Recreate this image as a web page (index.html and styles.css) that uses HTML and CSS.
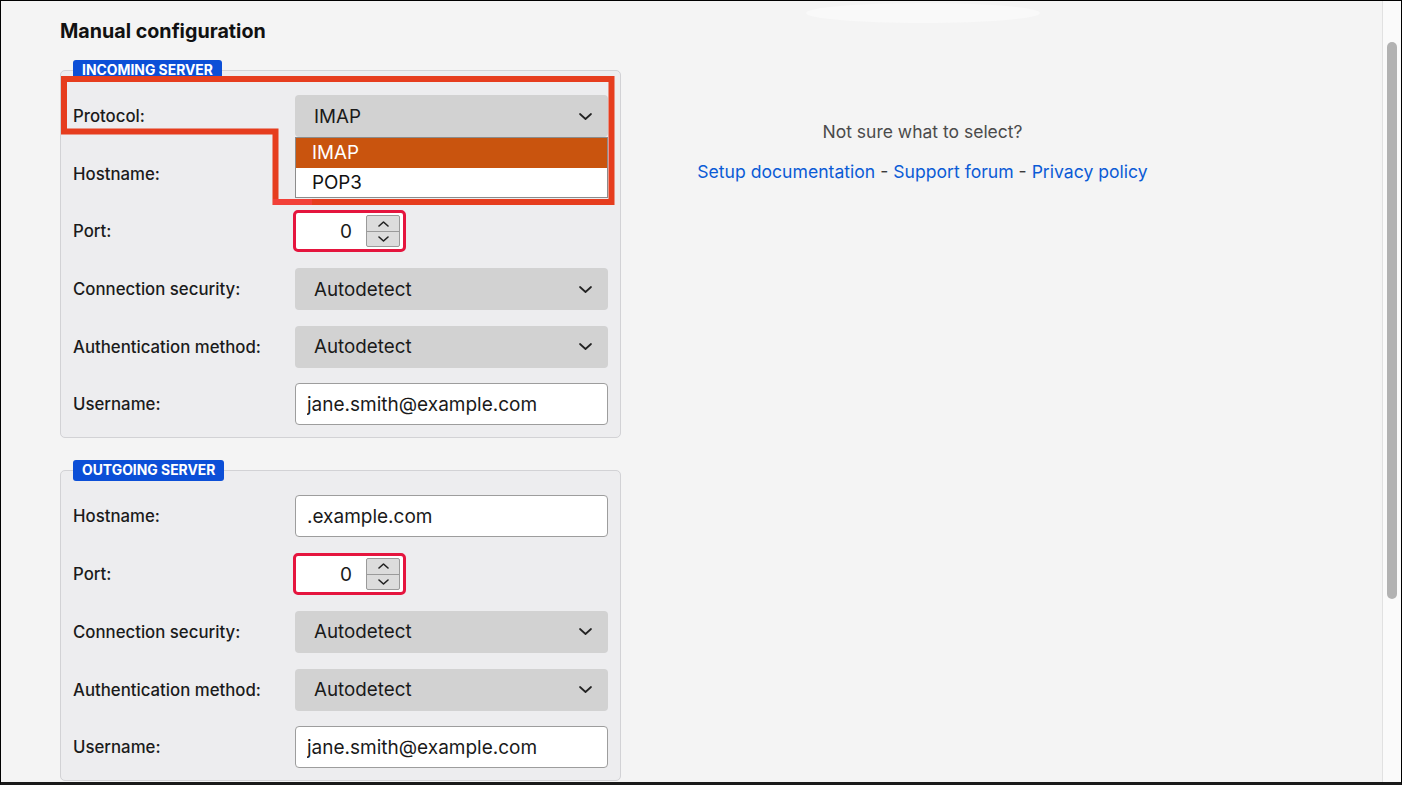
FILE: index.html
```html
<!DOCTYPE html>
<html lang="en">
<head>
  <meta charset="UTF-8">
  <title>Account setup</title>
  <meta name="viewport" content="width=device-width, initial-scale=1.0">
  <link rel="stylesheet" href="styles.css">
</head>
<body>

<div class="window">
  <main class="page">
    <h1 class="title">Manual configuration</h1>

    <div class="columns">
      <div class="config">

        <fieldset class="server">
          <legend class="badge">Incoming server</legend>
          <div class="rows">
            <label class="label">Protocol:</label>
            <div class="field">
              <div class="select">
                <span>IMAP</span>
                <svg class="chevron" width="13" height="7" viewBox="0 0 13 7"><path d="M1 1l5.5 5 5.5-5"/></svg>
              </div>
              <ul class="options">
                <li class="active">IMAP</li>
                <li>POP3</li>
              </ul>
            </div>

            <label class="label">Hostname:</label>
            <input class="text" type="text" value=".example.com">

            <label class="label">Port:</label>
            <div class="number invalid">
              <span class="value">0</span>
              <span class="spin">
                <span class="step"><svg width="11" height="6" viewBox="0 0 11 6"><path d="M1 5l4.5-4 4.5 4"/></svg></span>
                <span class="step"><svg width="11" height="6" viewBox="0 0 11 6"><path d="M1 1l4.5 4 4.5-4"/></svg></span>
              </span>
            </div>

            <label class="label">Connection security:</label>
            <div class="select">
              <span>Autodetect</span>
              <svg class="chevron" width="13" height="7" viewBox="0 0 13 7"><path d="M1 1l5.5 5 5.5-5"/></svg>
            </div>

            <label class="label">Authentication method:</label>
            <div class="select">
              <span>Autodetect</span>
              <svg class="chevron" width="13" height="7" viewBox="0 0 13 7"><path d="M1 1l5.5 5 5.5-5"/></svg>
            </div>

            <label class="label">Username:</label>
            <input class="text" type="text" value="jane.smith@example.com">
          </div>
        </fieldset>

        <fieldset class="server">
          <legend class="badge">Outgoing server</legend>
          <div class="rows">
            <label class="label">Hostname:</label>
            <input class="text" type="text" value=".example.com">

            <label class="label">Port:</label>
            <div class="number invalid">
              <span class="value">0</span>
              <span class="spin">
                <span class="step"><svg width="11" height="6" viewBox="0 0 11 6"><path d="M1 5l4.5-4 4.5 4"/></svg></span>
                <span class="step"><svg width="11" height="6" viewBox="0 0 11 6"><path d="M1 1l4.5 4 4.5-4"/></svg></span>
              </span>
            </div>

            <label class="label">Connection security:</label>
            <div class="select">
              <span>Autodetect</span>
              <svg class="chevron" width="13" height="7" viewBox="0 0 13 7"><path d="M1 1l5.5 5 5.5-5"/></svg>
            </div>

            <label class="label">Authentication method:</label>
            <div class="select">
              <span>Autodetect</span>
              <svg class="chevron" width="13" height="7" viewBox="0 0 13 7"><path d="M1 1l5.5 5 5.5-5"/></svg>
            </div>

            <label class="label">Username:</label>
            <input class="text" type="text" value="jane.smith@example.com">
          </div>
        </fieldset>

      </div>

      <div class="help">
        <p class="hint">Not sure what to select?</p>
        <p class="links">
          <a href="#">Setup documentation</a> - <a href="#">Support forum</a> - <a href="#">Privacy policy</a>
        </p>
      </div>
    </div>
  </main>

  <div class="scrollbar"><div class="thumb"></div></div>

  <!-- highlight drawn around the protocol picker -->
  <svg class="marker" width="1402" height="785" viewBox="0 0 1402 785">
    <path d="M64 79H611.5V202H275.5V131.5H64Z"/>
    <line class="marker-tail" x1="273" y1="202" x2="312" y2="202"/>
  </svg>
</div>

</body>
</html>
```

FILE: styles.css
```css
* {
  box-sizing: border-box;
}

body {
  margin: 0;
  font-family: Inter, "Liberation Sans", sans-serif;
  color: #1b1b1b;
  background: #fff;
}

.window {
  position: relative;
  width: 1402px;
  height: 785px;
  display: flex;
  border: 1px solid #000;
  border-bottom: 3px solid #1a1a1a;
  background: #f4f4f4;
  overflow: hidden;
}

/* faint glare near the top edge */
.window::after {
  content: "";
  position: absolute;
  left: 805px;
  top: 2px;
  width: 234px;
  height: 20px;
  border-radius: 50%;
  background: #f9f9f9;
  pointer-events: none;
}

.page {
  flex: 1;
  padding: 16px 0 0 59px;
}

.title {
  margin: 0 0 15px;
  font-size: 19.7px;
  line-height: 28px;
  font-weight: 700;
  color: #111;
}

.columns {
  display: grid;
  grid-template-columns: 561px 603px;
}

.server {
  margin: 0;
  padding: 14px 12px 12px;
  border: 1px solid #d2d2d5;
  border-radius: 5px;
  background: #ededef;
  min-width: 0;
}

.server + .server {
  margin-top: 22px;
}

.badge {
  padding: 0 9px;
  font-size: 13.9px;
  line-height: 21px;
  font-weight: 700;
  text-transform: uppercase;
  color: #fff;
  background: #0c4fd7;
  border-radius: 3px;
}

.rows {
  display: grid;
  grid-template-columns: 222px 313px;
  row-gap: 15.7px;
  align-items: center;
}

.label {
  font-size: 16.8px;
  font-weight: 500;
  color: #1b1b1b;
}

.field {
  position: relative;
}

.select {
  height: 42px;
  display: flex;
  align-items: center;
  justify-content: space-between;
  padding: 0 16px 0 19px;
  background: #d2d2d2;
  border-radius: 4px;
  font-size: 18.8px;
  color: #1a1a1a;
}

.chevron path,
.step path {
  fill: none;
  stroke: #222;
  stroke-width: 1.7;
  stroke-linecap: round;
  stroke-linejoin: round;
}

.options {
  position: absolute;
  top: 42px;
  left: 0;
  width: 313px;
  margin: 0;
  padding: 0;
  list-style: none;
  background: #fff;
  border: 1px solid #8c8c8c;
  z-index: 2;
}

.options li {
  height: 29.5px;
  line-height: 29.5px;
  padding-left: 16px;
  font-size: 18.8px;
  color: #111;
}

.options li.active {
  background: #c9540e;
  color: #fff;
}

.text {
  width: 313px;
  height: 42px;
  margin: 0;
  padding: 0 11px;
  font: inherit;
  font-size: 19px;
  color: #1a1a1a;
  background: #fff;
  border: 1px solid #9d9d9d;
  border-radius: 4px;
}

.number {
  width: 113px;
  height: 42px;
  margin-left: -2px;
  display: flex;
  align-items: center;
  padding-right: 3px;
  background: #fff;
  border: 3px solid #c8c8c8;
  border-radius: 5px;
  font-size: 19px;
}

.number.invalid {
  border-color: #e5153e;
}

.value {
  flex: 1;
  text-align: right;
  padding-right: 14px;
}

.spin {
  width: 34px;
  height: 32px;
  display: flex;
  flex-direction: column;
  border: 1px solid #9a9a9a;
  border-radius: 2px;
  background: #dcdcdc;
}

.step {
  flex: 1;
  display: flex;
  align-items: center;
  justify-content: center;
}

.step + .step {
  border-top: 1px solid #9a9a9a;
}

.step path {
  stroke-width: 1.6;
}

.help {
  padding-top: 61px;
  text-align: center;
}

.help p {
  margin: 0;
  font-size: 17.5px;
  line-height: 22px;
}

.hint {
  color: #4b4b4b;
}

.help .links {
  margin-top: 18px;
  font-size: 17.6px;
  color: #3a3a3a;
}

.links a {
  color: #0b5bd6;
  text-decoration: none;
}

.scrollbar {
  width: 19px;
  background: #fafafa;
  border-left: 1px solid #e1e1e1;
  padding: 41px 0 0 4px;
}

.thumb {
  width: 10px;
  height: 557px;
  border-radius: 5px;
  background: #b2b2b2;
}

.marker {
  position: absolute;
  left: -1px;
  top: -1px;
  pointer-events: none;
  z-index: 3;
}

.marker path {
  fill: none;
  stroke: #e63d1e;
  stroke-width: 6;
  stroke-linejoin: miter;
}

.marker-tail {
  stroke: #f24038;
  stroke-width: 6;
}
```
